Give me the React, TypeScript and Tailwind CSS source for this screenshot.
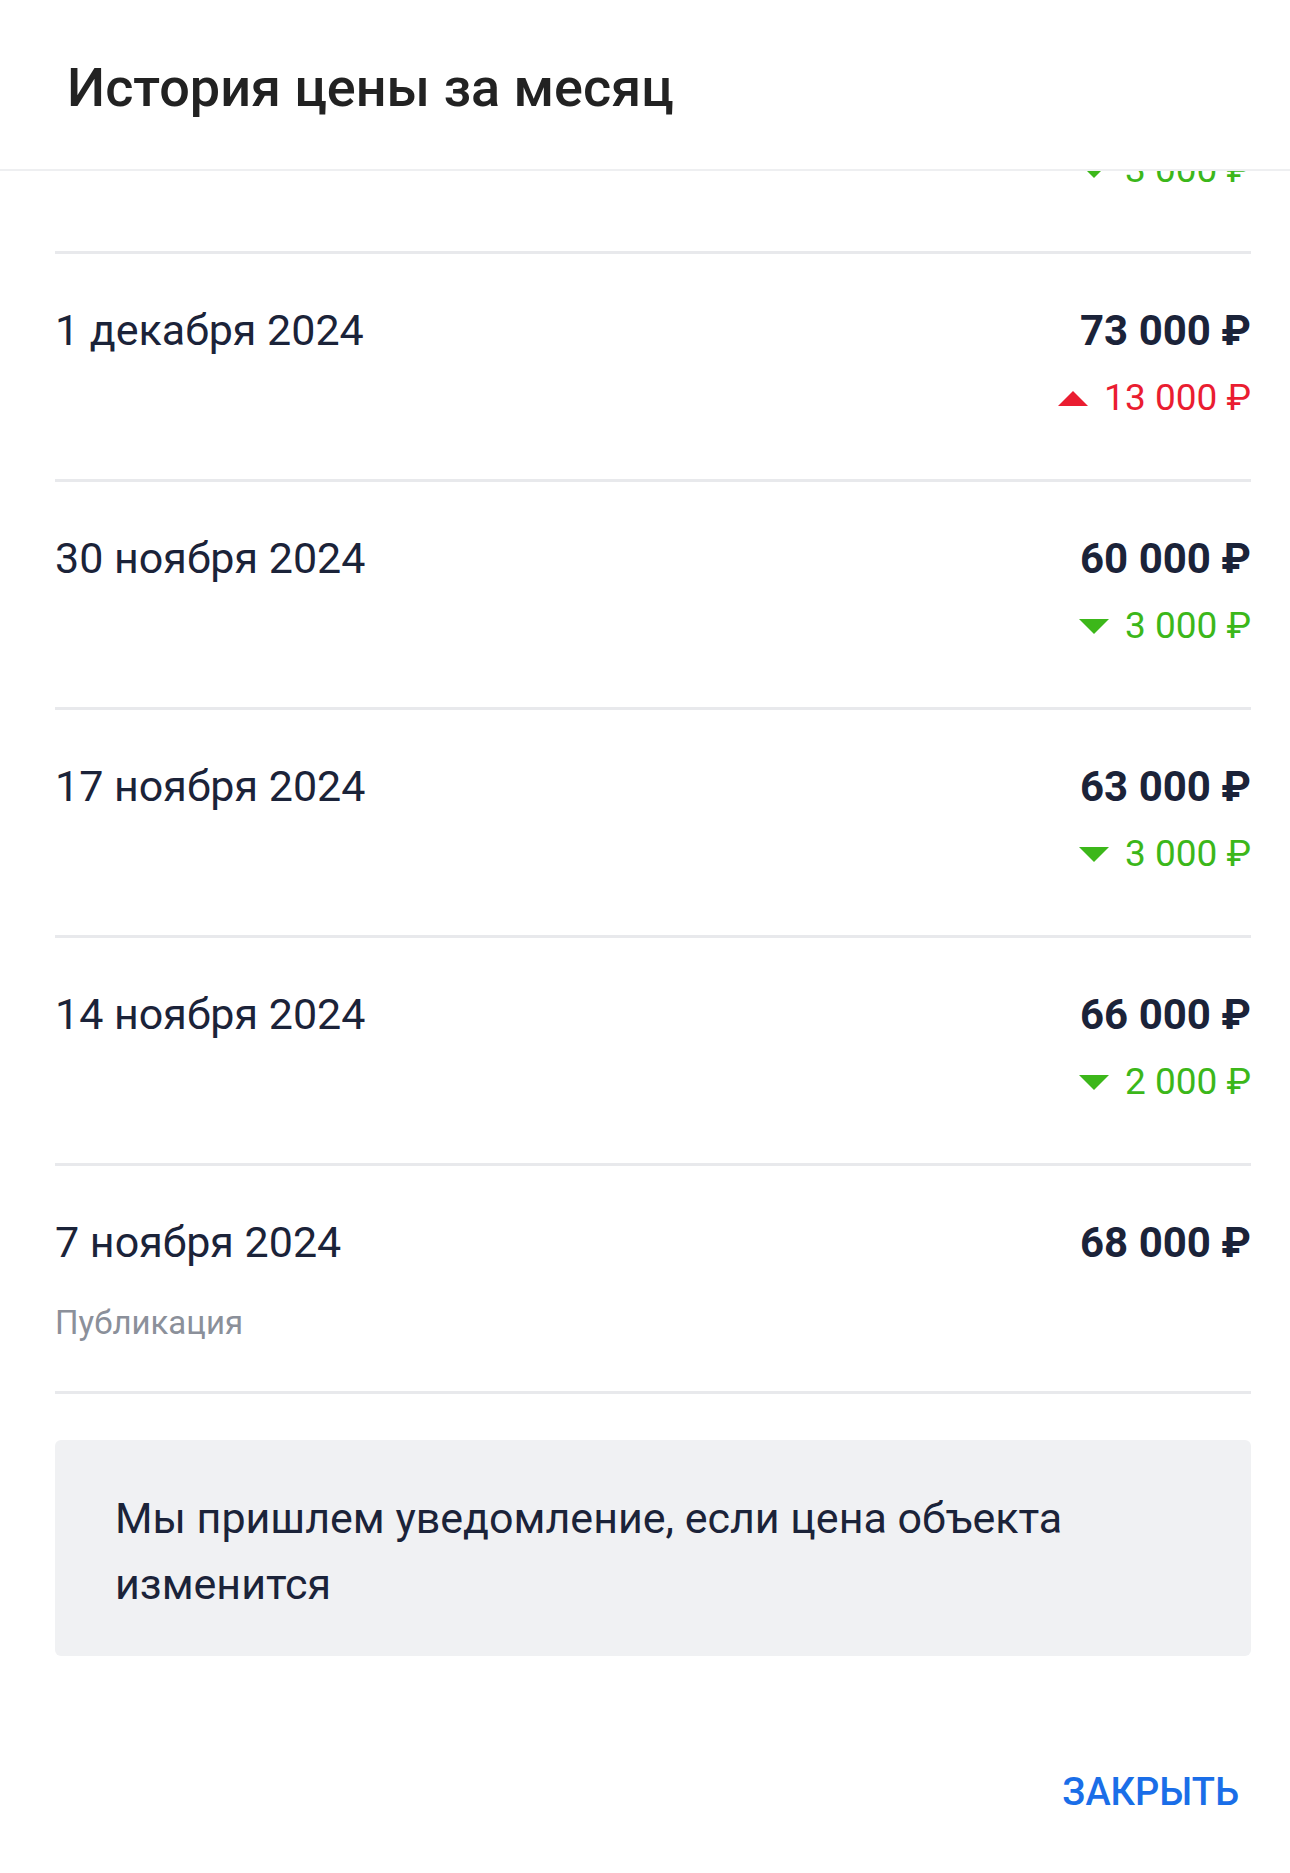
import React from "react";

type Change = { dir: "up" | "down"; amount: string } | null;
type Row = { date: string; price: string; change: Change; note?: string };

const rows: Row[] = [
  { date: "1 декабря 2024", price: "73 000 ₽", change: { dir: "up", amount: "13 000 ₽" } },
  { date: "30 ноября 2024", price: "60 000 ₽", change: { dir: "down", amount: "3 000 ₽" } },
  { date: "17 ноября 2024", price: "63 000 ₽", change: { dir: "down", amount: "3 000 ₽" } },
  { date: "14 ноября 2024", price: "66 000 ₽", change: { dir: "down", amount: "2 000 ₽" } },
  { date: "7 ноября 2024", price: "68 000 ₽", change: null, note: "Публикация" },
];

function Tri({ dir }: { dir: "up" | "down" }) {
  return (
    <svg width="30" height="15" viewBox="0 0 30 15" className="shrink-0">
      {dir === "up" ? (
        <polygon points="0,15 30,15 15,0" fill="#ea1d31" />
      ) : (
        <polygon points="0,0 30,0 15,15" fill="#3cb71a" />
      )}
    </svg>
  );
}

function ChangeLine({ c }: { c: { dir: "up" | "down"; amount: string } }) {
  return (
    <div
      className={`flex items-center justify-end gap-[16px] h-[56px] text-[37px] ${
        c.dir === "up" ? "text-[#ea1d31]" : "text-[#3cb71a]"
      }`}
    >
      <Tri dir={c.dir} />
      <span>{c.amount}</span>
    </div>
  );
}

export default function App() {
  return (
    <div
      className="w-[1290px] h-[1873px] bg-white flex flex-col overflow-hidden"
      style={{ fontFamily: "Roboto, 'Noto Sans', sans-serif" }}
    >
      <header className="h-[171px] shrink-0 border-b-2 border-[#eeeff1] flex items-center pl-[67px] relative z-10 bg-white">
        <h1 className="text-[54px] font-medium text-[#222222] leading-none mt-[6px]">
          История цены за месяц
        </h1>
      </header>

      <div className="pl-[55px] pr-[39px]">
        <div className="h-[80px] overflow-hidden">
          <div className="-mt-[29px]">
            <ChangeLine c={{ dir: "down", amount: "3 000 ₽" }} />
          </div>
        </div>

        {rows.map((r, i) => (
          <div
            key={i}
            className="h-[228px] border-t-[3px] border-[#e8e9ec] pt-[48px] flex justify-between text-[#1b2339]"
          >
            <div className="flex flex-col">
              <div className="h-[56px] flex items-center text-[43px]">{r.date}</div>
              {r.note && (
                <div className="mt-[31px] h-[44px] flex items-center text-[33px] text-[#8b909a]">
                  {r.note}
                </div>
              )}
            </div>
            <div className="flex flex-col items-end">
              <div className="h-[56px] flex items-center text-[42px] font-bold">{r.price}</div>
              {r.change && (
                <div className="mt-[12px]">
                  <ChangeLine c={r.change} />
                </div>
              )}
            </div>
          </div>
        ))}
        <div className="border-t-[3px] border-[#e8e9ec]" />

        <div className="mt-[46px] bg-[#f0f1f3] rounded-[6px] pl-[60px] pr-[40px] pt-[45px] pb-[39px] text-[43px] leading-[66px] text-[#1b2339]">
          Мы пришлем уведомление, если цена объекта изменится
        </div>

        <div className="flex justify-end pr-[12px] mt-[101px]">
          <button className="text-[38px] font-medium text-[#1a6ee8] leading-[70px]">
            ЗАКРЫТЬ
          </button>
        </div>
      </div>
    </div>
  );
}
